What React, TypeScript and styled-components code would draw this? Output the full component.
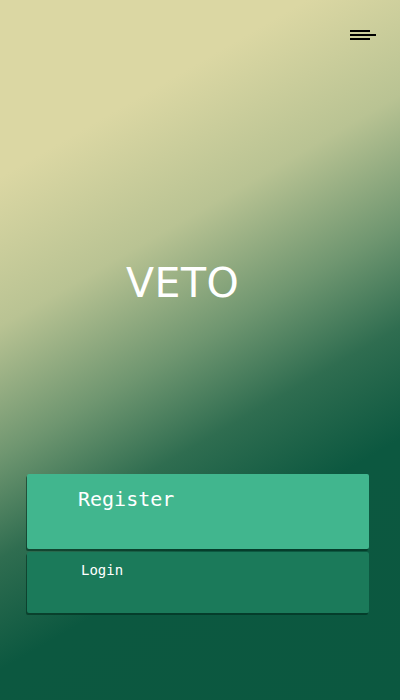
import React from "react";
import styled, { createGlobalStyle } from "styled-components";

const Global = createGlobalStyle`
    body{
        margin:0;
        font-family:"DejaVu Sans", sans-serif;
    }
`;

const Page = styled.div`
    min-height:100vh;
    display:flex;
    flex-direction:column;
    background:linear-gradient(150deg, #dbd7a3 0%, #dbd7a3 19%, #b9c393 35%, #6f9670 49%, #2f6d50 60%, #0c5840 72%, #0b5840 100%);
`;

const Header = styled.header`
    display:flex;
    justify-content:flex-end;
    padding:28px 24px 0 0;
`;

const MenuButton = styled.button`
    border:none;
    background:none;
    padding:0;
    width:26px;
    height:10px;
    display:block;
    cursor:pointer;
`;

const Title = styled.h1`
    margin:221px 0 0 0;
    padding-left:126px;
    font-family:"DejaVu Sans", sans-serif;
    font-size:41px;
    font-weight:400;
    letter-spacing:0.5px;
    line-height:49px;
    color:#ffffff;
`;

const Actions = styled.div`
    display:flex;
    flex-direction:column;
    gap:3px;
    margin:166px 31px 0 27px;
`;

const Action = styled.button<{ $primary?: boolean }>`
    width:100%;
    border:none;
    border-radius:2px;
    text-align:left;
    cursor:pointer;
    font-family:"DejaVu Sans Mono", monospace;
    color:#ffffff;
    background-color:${p => p.$primary ? "#41b68e" : "#1b7a5a"};
    height:${p => p.$primary ? "75px" : "61px"};
    padding:${p => p.$primary ? "13px 51px" : "10px 54px"};
    font-size:${p => p.$primary ? "20px" : "14px"};
    line-height:normal;
    box-shadow:-1px 2px 0 rgba(0, 40, 25, 0.55);
    display:flex;
    align-items:flex-start;
`;

const MenuIcon = () => (
    <svg width="26" height="10" viewBox="0 0 26 10">
        <rect x="0" y="0" width="20" height="2" fill="#000" />
        <rect x="0" y="4" width="26" height="2" fill="#000" />
        <rect x="0" y="8" width="20" height="2" fill="#000" />
    </svg>
);

const App = () => {
    return (
        <Page>
            <Global />
            <Header>
                <MenuButton aria-label="menu">
                    <MenuIcon />
                </MenuButton>
            </Header>
            <Title>VETO</Title>
            <Actions>
                <Action $primary>Register</Action>
                <Action>Login</Action>
            </Actions>
        </Page>
    );
};

export default App;
